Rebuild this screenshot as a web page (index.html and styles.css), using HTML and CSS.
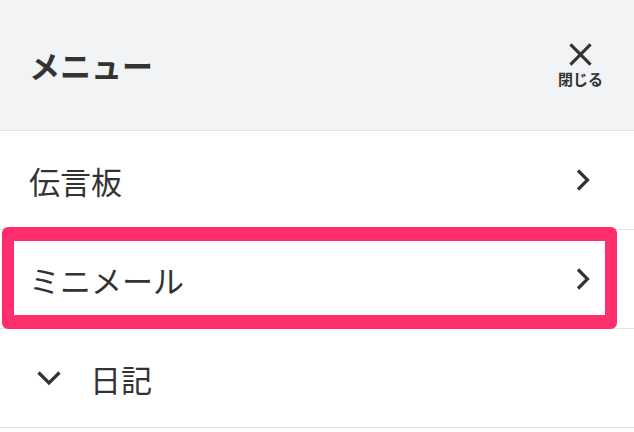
FILE: index.html
```html
<!DOCTYPE html>
<html lang="ja">
<head>
<meta charset="utf-8">
<link rel="stylesheet" href="styles.css">
</head>
<body>
<div class="menu">
  <header class="menu-header">
    <h1 class="menu-title">メニュー</h1>
    <button class="close-btn" type="button">
      <svg class="close-icon" width="24" height="24" viewBox="0 0 24 24" aria-hidden="true">
        <path d="M1.5 1.5 L22.5 22.5 M22.5 1.5 L1.5 22.5" stroke="#333" stroke-width="3.2" fill="none" stroke-linecap="butt"/>
      </svg>
      <span class="close-label">閉じる</span>
    </button>
  </header>
  <ul class="menu-list">
    <li class="menu-item">
      <span class="item-label">伝言板</span>
      <svg class="chev-right" width="16" height="24" viewBox="0 0 16 24" aria-hidden="true">
        <polyline points="3,2.5 12.5,12 3,21.5" stroke="#333" stroke-width="3.2" fill="none"/>
      </svg>
    </li>
    <li class="menu-item highlighted">
      <span class="item-label">ミニメール</span>
      <svg class="chev-right" width="16" height="24" viewBox="0 0 16 24" aria-hidden="true">
        <polyline points="3,2.5 12.5,12 3,21.5" stroke="#333" stroke-width="3.2" fill="none"/>
      </svg>
      <span class="highlight-frame"></span>
    </li>
    <li class="menu-item group">
      <svg class="chev-down" width="26" height="16" viewBox="0 0 26 16" aria-hidden="true">
        <polyline points="2.5,2.5 13,13 23.5,2.5" stroke="#333" stroke-width="3.2" fill="none"/>
      </svg>
      <span class="item-label">日記</span>
    </li>
  </ul>
</div>
</body>
</html>
```

FILE: styles.css
```css
html, body {
  margin: 0;
  padding: 0;
  background: #ffffff;
}

body {
  font-family: "Noto Sans CJK JP", "Noto Sans", sans-serif;
  color: #333333;
}

.menu {
  width: 634px;
}

.menu-header {
  height: 130px;
  background: #f2f3f5;
  border-bottom: 1px solid #e2e3e7;
  display: flex;
  align-items: center;
  justify-content: space-between;
  padding: 0 31px 0 29px;
}

.menu-title {
  margin: 0;
  font-size: 31px;
  font-weight: 700;
  color: #333333;
  line-height: 1;
  padding-bottom: 2px;
}

.close-btn {
  display: flex;
  flex-direction: column;
  align-items: center;
  gap: 3px;
  background: none;
  border: 0;
  padding: 0;
  margin-top: 2px;
  font-family: inherit;
  color: #333333;
}

.close-icon {
  display: block;
  width: 23px;
  height: 23px;
}

.close-label {
  font-size: 15px;
  font-weight: 700;
  line-height: 20px;
}

.menu-list {
  list-style: none;
  margin: 0;
  padding: 0;
}

.menu-item {
  position: relative;
  height: 98px;
  border-bottom: 1px solid #e2e3e7;
  display: flex;
  align-items: center;
  justify-content: space-between;
  padding: 0 43px 0 29px;
}

.item-label {
  font-size: 31px;
  line-height: 1;
  color: #333333;
}

.chev-right {
  display: block;
}

.menu-item.group {
  justify-content: flex-start;
  gap: 28px;
  padding-left: 36px;
}

.chev-down {
  display: block;
}

.highlight-frame {
  position: absolute;
  left: 2px;
  right: 17px;
  top: -3px;
  bottom: -1px;
  border-style: solid;
  border-color: #ff2e6c;
  border-width: 14px 12px;
  border-radius: 6px;
  pointer-events: none;
}
```
